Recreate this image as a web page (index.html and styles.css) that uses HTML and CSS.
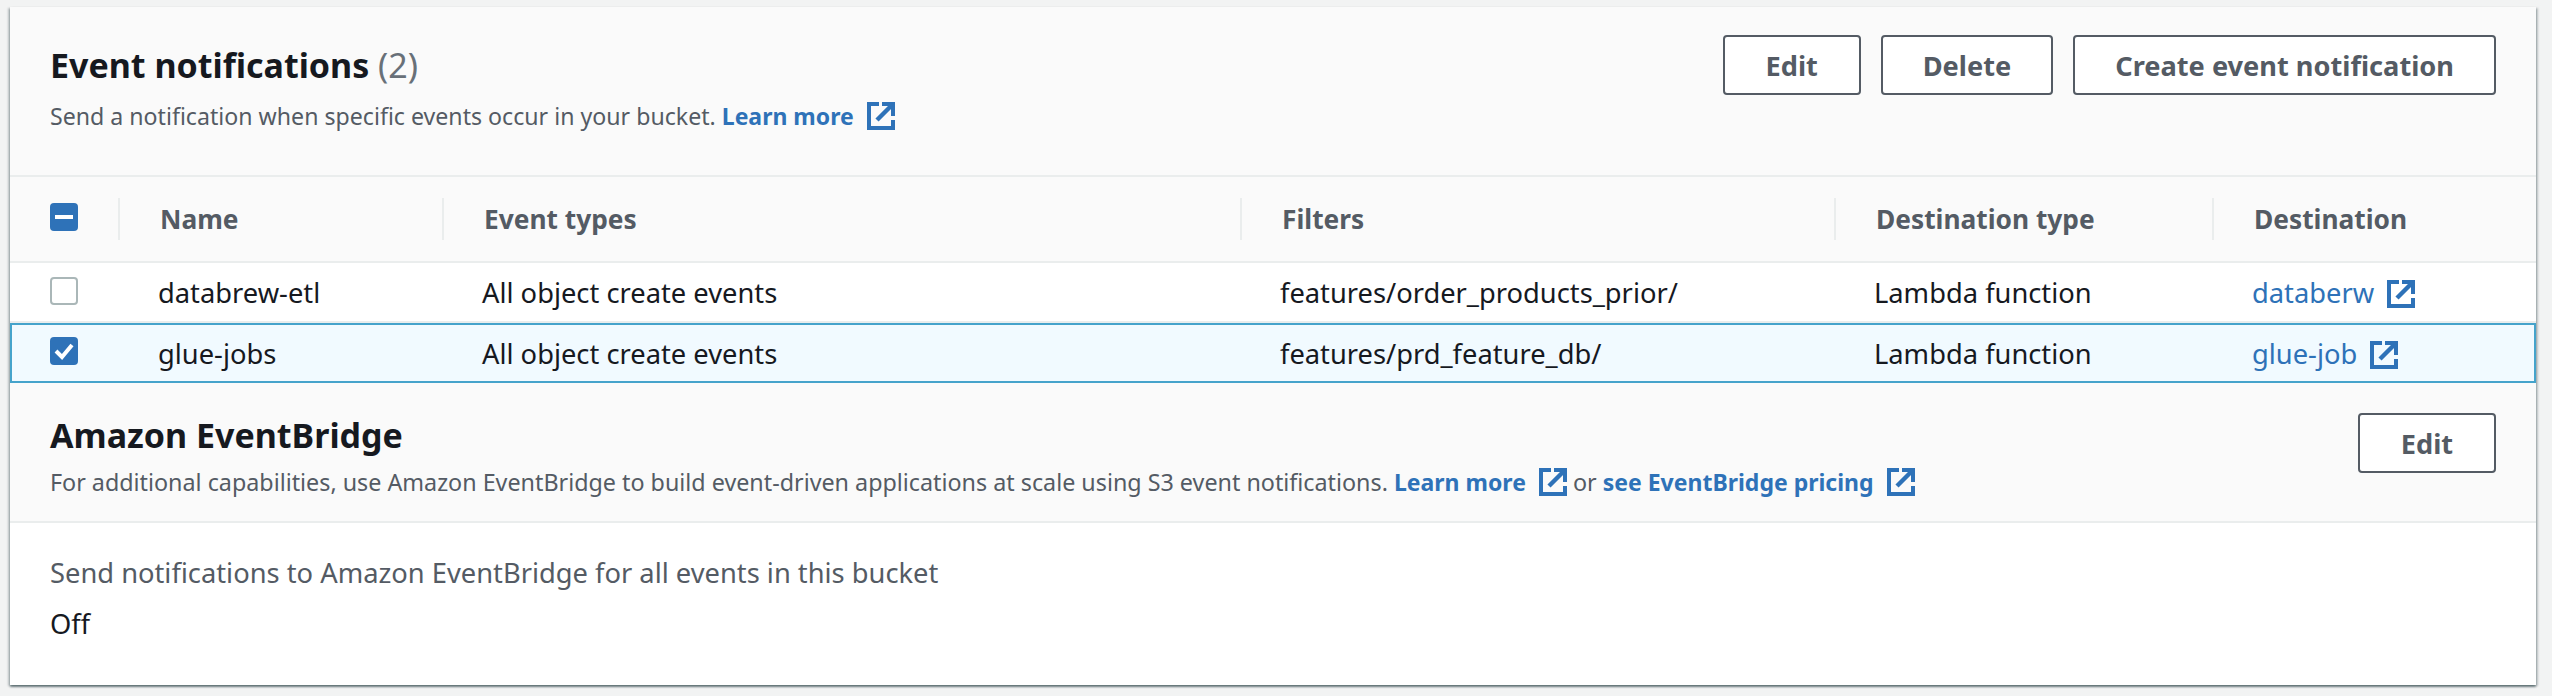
FILE: index.html
```html
<!DOCTYPE html>
<html>
<head>
<title>Event notifications</title>
<link rel="stylesheet" href="styles.css">
</head>
<body>

<svg class="icon-defs" width="0" height="0">
 <symbol id="ext" viewBox="0 0 28 28">
  <path d="M12 2H2v24h24v-8M15 2h11v12" fill="none" stroke="currentColor" stroke-width="4"/>
  <path d="M26 2L10 18" fill="none" stroke="currentColor" stroke-width="4.5"/>
 </symbol>
</svg>

<div class="card">
 <div class="card-header events-header">
  <div class="events-heading">
   <h2 class="card-title">Event notifications <span class="count">(2)</span></h2>
   <p class="card-desc">Send a notification when specific events occur in your bucket. <a class="link-strong" href="#">Learn more<svg class="ext"><use href="#ext"/></svg></a></p>
  </div>
  <div class="actions">
   <button class="btn btn-short">Edit</button>
   <button class="btn">Delete</button>
   <button class="btn">Create event notification</button>
  </div>
 </div>

 <table class="events">
  <colgroup>
   <col class="col-check"><col class="col-name"><col class="col-types"><col class="col-filters"><col class="col-desttype"><col>
  </colgroup>
  <thead>
   <tr>
    <th><div class="head-label head-check"><span class="box box-on">
     <svg viewBox="0 0 28 28"><path d="M5 14h18" stroke="#fff" stroke-width="4"/></svg>
    </span></div></th>
    <th><div class="head-label">Name</div></th>
    <th><div class="head-label">Event types</div></th>
    <th><div class="head-label">Filters</div></th>
    <th><div class="head-label">Destination type</div></th>
    <th><div class="head-label last">Destination</div></th>
   </tr>
  </thead>
  <tbody>
   <tr>
    <td class="check-cell"><span class="box"></span></td>
    <td>databrew-etl</td>
    <td>All object create events</td>
    <td>features/order_products_prior/</td>
    <td>Lambda function</td>
    <td><a href="#">databerw<svg class="ext"><use href="#ext"/></svg></a></td>
   </tr>
   <tr class="selected">
    <td class="check-cell"><span class="box box-on">
     <svg viewBox="0 0 28 28"><path d="M6 14l6 6 10-12" fill="none" stroke="#fff" stroke-width="4"/></svg>
    </span></td>
    <td>glue-jobs</td>
    <td>All object create events</td>
    <td>features/prd_feature_db/</td>
    <td>Lambda function</td>
    <td><a href="#">glue-job<svg class="ext"><use href="#ext"/></svg></a></td>
   </tr>
  </tbody>
 </table>

 <div class="card-header bridge-header">
  <div class="bridge-heading">
   <h2 class="card-title">Amazon EventBridge</h2>
   <p class="card-desc">For additional capabilities, use Amazon EventBridge to build event-driven applications at scale using S3 event notifications. <a class="link-strong" href="#">Learn more<svg class="ext"><use href="#ext"/></svg></a> or <a class="link-strong" href="#">see EventBridge pricing<svg class="ext"><use href="#ext"/></svg></a></p>
  </div>
  <div class="actions">
   <button class="btn btn-short">Edit</button>
  </div>
 </div>

 <div class="card-body">
  <div class="field-label">Send notifications to Amazon EventBridge for all events in this bucket</div>
  <div class="field-value">Off</div>
 </div>
</div>

</body>
</html>
```

FILE: styles.css
```css
body {
 margin: 0;
 padding: 7px 16px 13px 10px;
 background-color: #f2f3f3;
 font-family: "Noto Sans", sans-serif;
 font-size: 27.3px;
 color: #16191f;
}
.icon-defs { position: absolute; }

.card {
 background-color: #fff;
 box-shadow: 0 2px 2px rgba(0, 28, 36, 0.45), 2px 1px 2px rgba(0, 28, 36, 0.2), -2px 1px 2px rgba(0, 28, 36, 0.2);
}
.card-header {
 display: flex;
 justify-content: space-between;
 box-sizing: border-box;
 background-color: #fafafa;
 padding: 0 40px;
 border-bottom: 2px solid #eaeded;
}
.events-header { height: 170px; padding-top: 28px; }
.bridge-header { height: 140px; padding-top: 30px; }
.events-heading { padding-top: 5px; }
.bridge-heading { margin-top: -3px; }
.events-heading .card-desc { margin-top: 10px; font-size: 23.15px; }
.card-title {
 margin: 0;
 font-size: 34px;
 line-height: 50px;
 font-weight: 700;
}
.count { font-weight: 400; color: #687078; }
.card-desc {
 margin: 6px 0 0;
 font-size: 23.3px;
 line-height: 32px;
 color: #545b64;
}
a { color: #2e72b8; text-decoration: none; }
.link-strong { font-weight: 700; font-size: 23px; }
.ext {
 width: 28px;
 height: 28px;
 margin-left: 13px;
 vertical-align: -5px;
 color: #2e72b8;
}

.actions { display: flex; gap: 20px; align-items: flex-start; }
.btn {
 height: 60px;
 padding: 0 40px;
 background-color: #fff;
 border: 2px solid #545b64;
 border-radius: 4px;
 font-family: inherit;
 font-size: 27.2px;
 font-weight: 700;
 color: #545b64;
}
.btn-short { min-width: 138px; }

.events {
 width: 100%;
 table-layout: fixed;
 border-collapse: separate;
 border-spacing: 0;
}
.col-check { width: 110px; }
.col-name { width: 324px; }
.col-types { width: 798px; }
.col-filters { width: 594px; }
.col-desttype { width: 378px; }

.events th {
 height: 84px;
 padding: 0;
 background-color: #fafafa;
 border-bottom: 2px solid #eaeded;
 text-align: left;
 font-size: 26.3px;
 font-weight: 700;
 color: #545b64;
}
.head-label {
 box-sizing: border-box;
 height: 42px;
 line-height: 42px;
 padding-left: 40px;
 border-right: 2px solid #eaeded;
}
.head-label.last { border-right: none; }
.head-check { padding-top: 5px; }

.events td {
 height: 58px;
 padding: 0 0 0 38px;
 border-bottom: 2px solid #eaeded;
}
.events .check-cell { padding-left: 40px; }
.selected td {
 height: 56px;
 background-color: #f1faff;
 border-top: 2px solid #45a3cb;
 border-bottom: 2px solid #45a3cb;
}
.selected td:first-child { border-left: 2px solid #45a3cb; }
.selected td:last-child { border-right: 2px solid #45a3cb; }
.events .selected .check-cell { padding-left: 38px; }

.box {
 display: block;
 box-sizing: border-box;
 width: 28px;
 height: 28px;
 margin-bottom: 2px;
 background-color: #fff;
 border: 2px solid #aab7b8;
 border-radius: 4px;
}
.selected .box { margin-bottom: 4px; }
.box svg { display: block; width: 28px; height: 28px; }
.box-on { background-color: #2e72b8; border: none; }

.card-body { padding: 30px 40px 26px; height: 106px; }
.field-label { line-height: 40px; color: #545b64; }
.field-value { margin-top: 11px; line-height: 40px; }
```
